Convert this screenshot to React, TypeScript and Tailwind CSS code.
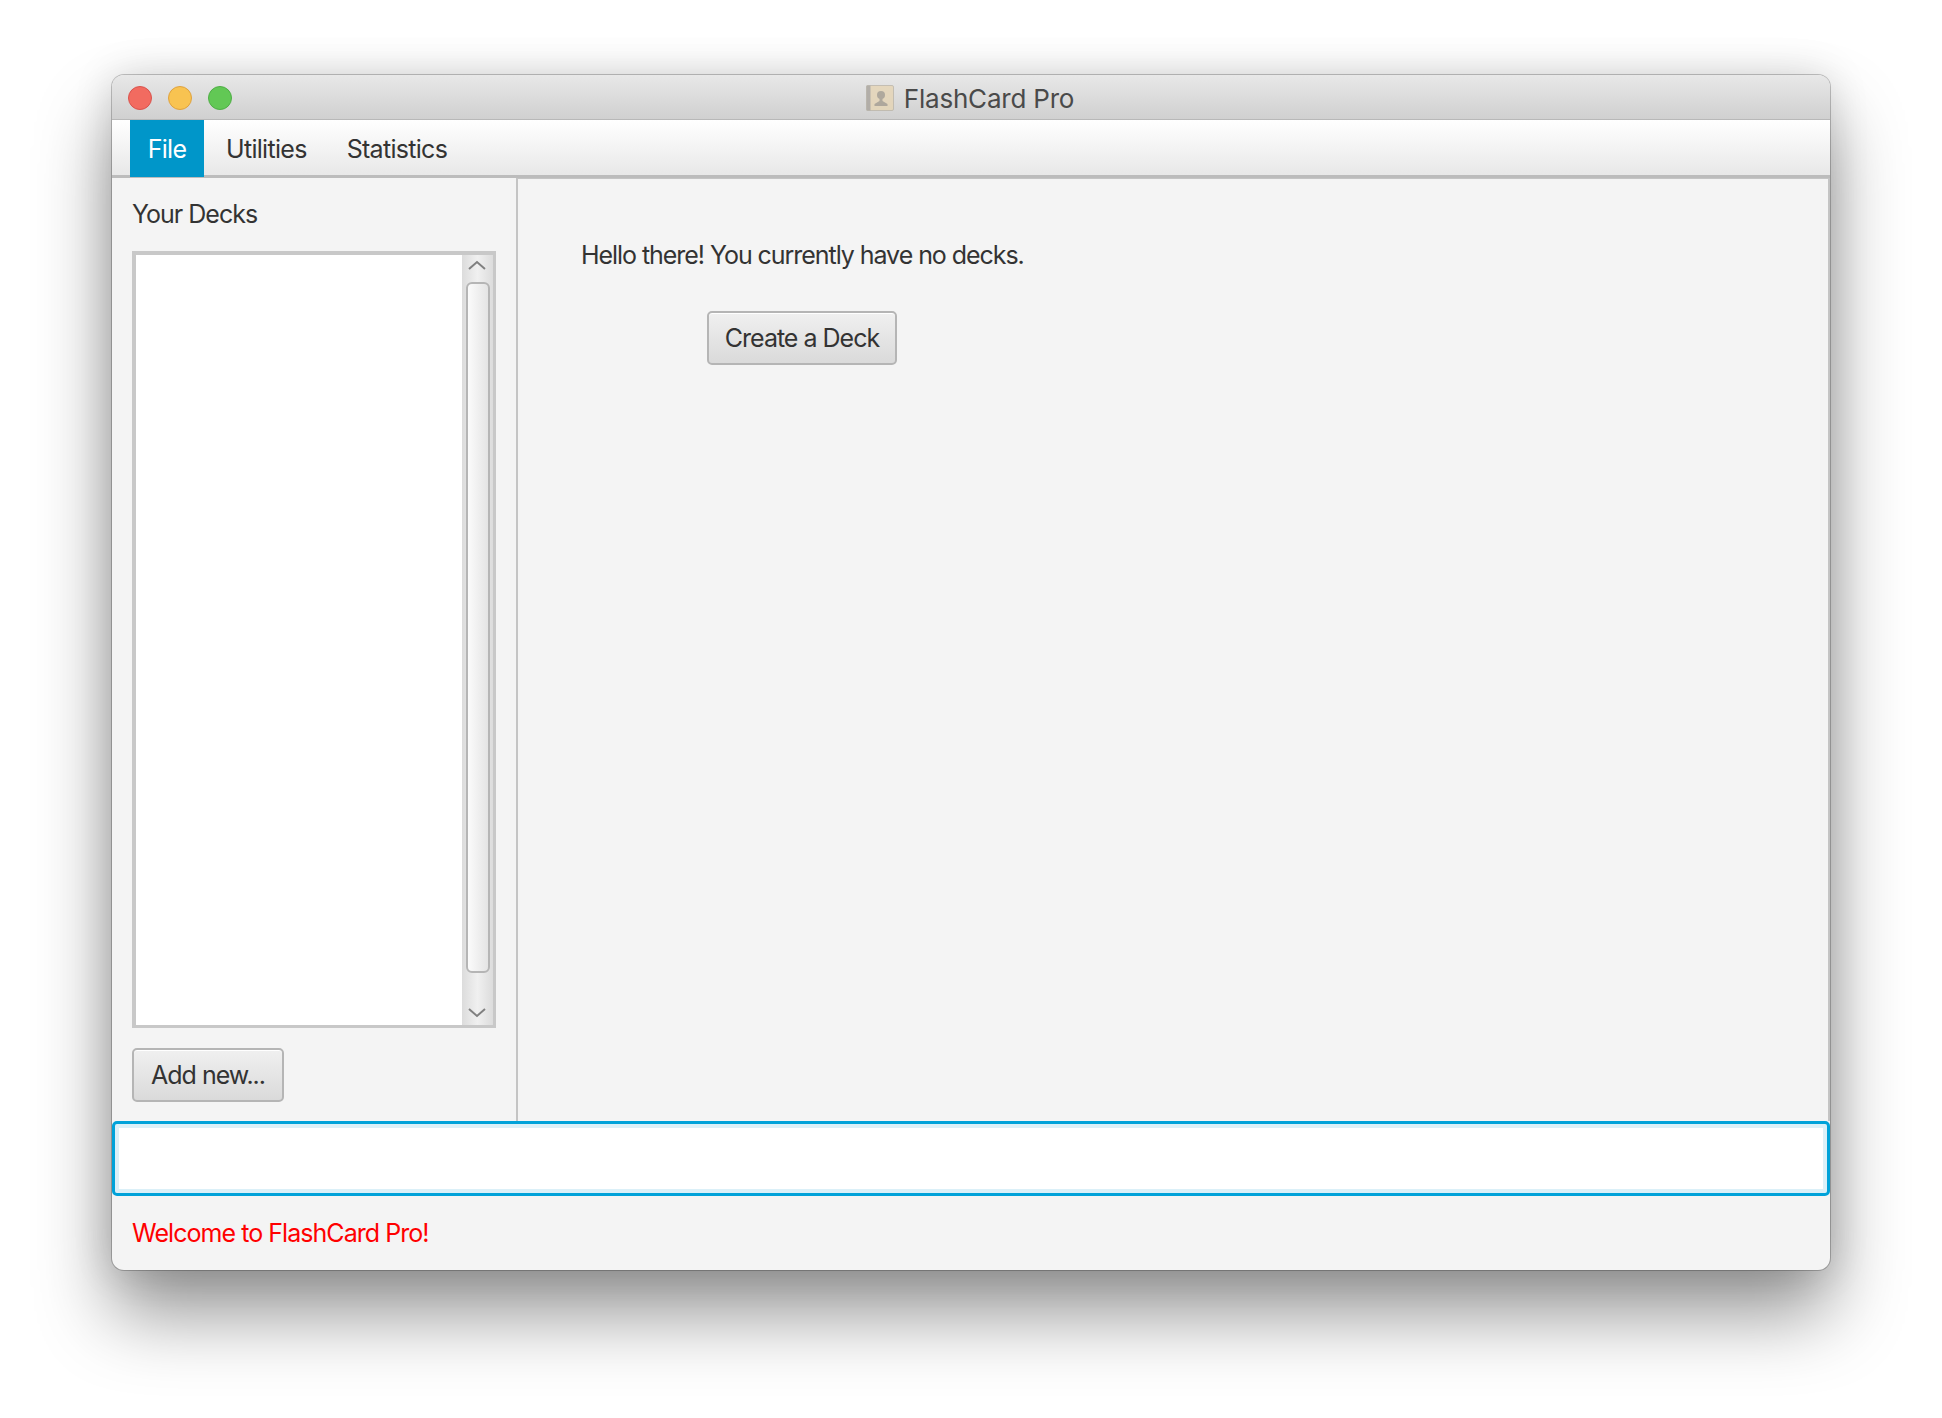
import React from 'react';

const font = { fontFamily: 'Inter, "Liberation Sans", sans-serif' };

const TrafficLight = ({ className }: { className: string }) => (
  <span className={`h-6 w-6 rounded-full border ${className}`} />
);

const AppIcon = () => (
  <svg width="28" height="26" viewBox="0 0 28 26" className="opacity-80">
    <rect x="0.5" y="0.5" width="27" height="25" rx="1.5" fill="#e6d5b5" stroke="#bdb6a8" />
    <rect x="0.5" y="0.5" width="4" height="25" fill="#a8a39c" />
    <circle cx="15" cy="10" r="4" fill="#a49c8e" />
    <path d="M13.5 13h3v3l5 3v2H8.500v-2l5-3z" fill="#a49c8e" />
  </svg>
);

const Button = ({ label, className }: { label: string; className: string }) => (
  <button
    className={`flex h-[54px] items-center justify-center rounded-[5px] border-2 border-[#b5b5b5] bg-gradient-to-b from-[#f0f0f0] to-[#dadada] pt-[2px] text-[25px] tracking-[-1px] text-[#333333] shadow-[inset_0_1px_0_#ffffff] ${className}`}
  >
    {label}
  </button>
);

const MenuItem = ({ label, active }: { label: string; active?: boolean }) => (
  <div
    className={`flex h-[57px] items-center pl-[22px] pr-[18px] pt-[2px] text-[25px] tracking-[-0.7px] ${
      active ? 'w-[74px] justify-center !px-0 bg-[#0096c9] text-white' : 'text-[#333333]'
    }`}
  >
    {label}
  </div>
);

export default function App() {
  return (
    <div className="h-[1418px] w-[1942px] overflow-hidden bg-white pl-[112px] pt-[75px]" style={font}>
      <div className="flex h-[1195px] w-[1718px] flex-col rounded-[12px] bg-[#f4f4f4] shadow-[0_0_0_1px_rgba(0,0,0,0.22),0_44px_75px_rgba(0,0,0,0.42),0_0_40px_rgba(0,0,0,0.14)]">
        {/* title bar */}
        <div className="relative flex h-[45px] shrink-0 items-center gap-4 rounded-t-[12px] border-b border-[#b8b8b8] bg-gradient-to-b from-[#e8e8e8] to-[#d0d0d0] pl-4 pt-[2px]">
          <TrafficLight className="border-[#d9534d] bg-[#f26b60]" />
          <TrafficLight className="border-[#dfa23f] bg-[#f8c351]" />
          <TrafficLight className="border-[#4fae46] bg-[#62c855]" />
          <div className="absolute inset-0 flex items-center justify-center gap-[10px] pr-[2px] pt-[2px] text-[26px] tracking-[-0.2px] text-[#4a4a4a]">
            <AppIcon />
            <span>FlashCard Pro</span>
          </div>
        </div>

        {/* menu bar */}
        <div className="flex h-[58px] shrink-0 items-start border-b-[3px] border-[#bcbcbc] bg-gradient-to-b from-white to-[#e8e8e8] pl-[18px]">
          <MenuItem label="File" active />
          <MenuItem label="Utilities" />
          <MenuItem label="Statistics" />
        </div>

        {/* body */}
        <div className="flex min-h-0 flex-1">
          <div className="flex w-[406px] shrink-0 flex-col border-r-[2px] border-[#c4c4c4] pl-5 pt-[18px]">
            <div className="text-[25px] leading-[36px] tracking-[-1px] text-[#333333]">Your Decks</div>
            <div className="mt-[19px] flex h-[777px] w-[364px] border-b-[3px] border-l-4 border-r-[3px] border-t-4 border-[#c8c8c8] bg-white">
              <div className="flex-1" />
              <div className="flex w-[31px] flex-col items-center bg-gradient-to-r from-[#dcdcdc] via-[#f0f0f0] to-[#dcdcdc]">
                <svg width="18" height="10" viewBox="0 0 18 10" className="-ml-[2px] mt-[5px]" fill="none" stroke="#808080" strokeWidth="2">
                  <path d="M1 9l8-7 8 7" />
                </svg>
                <div className="mt-[12px] h-[691px] w-[24px] rounded-[6px] border-2 border-[#b5b5b5] bg-gradient-to-r from-[#fbfbfb] to-[#e4e4e4]" />
                <svg width="18" height="10" viewBox="0 0 18 10" className="-ml-[2px] mt-[35px]" fill="none" stroke="#808080" strokeWidth="2">
                  <path d="M1 1l8 7 8-7" />
                </svg>
              </div>
            </div>
            <Button label="Add new..." className="mt-[20px] w-[152px]" />
          </div>
          <div className="flex-1 border-r-[2px] border-t border-[#c4c4c4] pl-[63px] pt-[58px]">
            <div className="text-[25px] leading-[36px] tracking-[-1.05px] text-[#333333]">
              Hello there! You currently have no decks.
            </div>
            <Button label="Create a Deck" className="ml-[126px] mt-[38px] w-[190px]" />
          </div>
        </div>

        {/* input */}
        <div className="h-[75px] shrink-0 rounded-[5px] border-[3px] border-[#00a2d9] bg-white shadow-[inset_0_0_0_4px_#dbf0f8]" />

        {/* status */}
        <div className="flex h-[74px] shrink-0 items-center pt-[1px] pl-5 text-[25px] tracking-[-0.95px] text-[#ff0000]">
          Welcome to FlashCard Pro!
        </div>
      </div>
    </div>
  );
}
